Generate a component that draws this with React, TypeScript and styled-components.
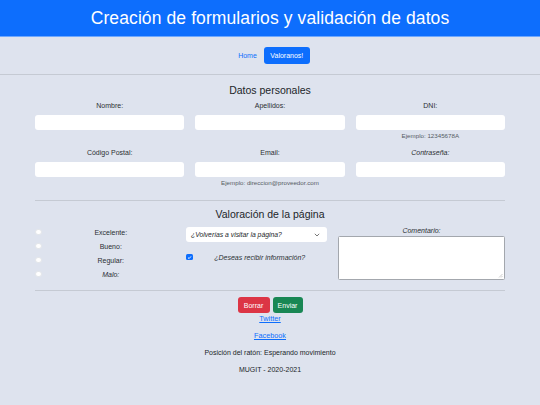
import React from "react";
import styled, { createGlobalStyle } from "styled-components";

const Global = createGlobalStyle`
  html, body { margin: 0; padding: 0; }
  body {
    background: #dee3ee;
    font-family: "Liberation Sans", Arial, sans-serif;
    color: #212529;
    width: 540px;
    height: 405px;
    overflow: hidden;
  }
  * { box-sizing: border-box; }
`;

const Header = styled.header`
  height: 37px;
  background: #0d6efd;
  display: flex;
  align-items: center;
  justify-content: center;
  border-bottom: 1px solid #6ea8fe;
`;

const Title = styled.h1`
  margin: 0;
  color: #fff;
  font-size: 17.5px;
  font-weight: 400;
  letter-spacing: 0.1px;
  padding-top: 1px;
`;

const Nav = styled.nav`
  height: 38px;
  display: flex;
  align-items: center;
  justify-content: center;
  gap: 7px;
  border-bottom: 1px solid #c5cad3;
  padding-left: 8px;
`;

const NavLink = styled.a<{ $active?: boolean }>`
  font-size: 7px;
  text-decoration: none;
  height: 17px;
  display: flex;
  align-items: center;
  padding: 0 ${(p) => (p.$active ? "6.5px" : "0")};
  border-radius: 3px;
  color: ${(p) => (p.$active ? "#fff" : "#0d6efd")};
  background: ${(p) => (p.$active ? "#0d6efd" : "transparent")};
`;

const Main = styled.main`
  padding: 0 35px;
`;

const SectionTitle = styled.h2<{ $top: number }>`
  margin: ${(p) => p.$top}px 0 0;
  height: 18px;
  line-height: 18px;
  text-align: center;
  font-size: 10.5px;
  font-weight: 400;
`;

const FieldGrid = styled.div`
  display: grid;
  grid-template-columns: repeat(3, 1fr);
  column-gap: 11px;
  row-gap: 8px;
  margin-top: 2px;
`;

const Field = styled.div`
  display: flex;
  flex-direction: column;
`;

const Label = styled.label<{ $italic?: boolean }>`
  display: block;
  height: 10px;
  line-height: 10px;
  font-size: 7px;
  color: #2b2f33;
  text-align: center;
  font-style: ${(p) => (p.$italic ? "italic" : "normal")};
`;

const TextInput = styled.div`
  margin-top: 4px;
  height: 15px;
  background: #fff;
  border-radius: 3px;
`;

const Help = styled.div`
  margin-top: 2px;
  height: 8px;
  line-height: 8px;
  font-size: 6.2px;
  color: #555b63;
  text-align: center;
`;

const Rule = styled.hr<{ $top: number }>`
  margin: ${(p) => p.$top}px 0 0;
  border: 0;
  border-top: 1px solid #c5cad3;
`;

const RatingGrid = styled.div`
  display: grid;
  grid-template-columns: 145px 141px 1fr;
  column-gap: 6px;
  margin-top: 1px;
`;

const RadioCol = styled.div`
  display: flex;
  flex-direction: column;
  padding-top: 1px;
`;

const OptionRow = styled.div`
  height: 14px;
  display: flex;
  align-items: center;
`;

const Radio = styled.span`
  width: 6.5px;
  height: 6.5px;
  border-radius: 50%;
  background: #fff;
  border: 0.5px solid #e3e6ea;
  flex: none;
`;

const OptionLabel = styled.span<{ $italic?: boolean }>`
  flex: 1;
  text-align: center;
  font-size: 7px;
  color: #2b2f33;
  font-style: ${(p) => (p.$italic ? "italic" : "normal")};
`;

const MidCol = styled.div`
  display: flex;
  flex-direction: column;
`;

const Select = styled.div`
  margin-top: 3px;
  height: 15px;
  background: #fff;
  border-radius: 3px;
  display: flex;
  align-items: center;
  justify-content: space-between;
  padding: 0 7px 0 5px;
  font-size: 6.8px;
  font-style: italic;
`;

const CheckRow = styled.div`
  margin-top: 8px;
  height: 14px;
  display: flex;
  align-items: center;
`;

const Check = styled.span`
  width: 6.5px;
  height: 6.5px;
  border-radius: 1.5px;
  background: #0d6efd;
  display: flex;
  align-items: center;
  justify-content: center;
  flex: none;
`;

const CommentCol = styled.div`
  display: flex;
  flex-direction: column;
  padding-top: 2px;
  margin-left: 5px;
`;

const TextArea = styled.div`
  height: 44px;
  background: #fff;
  border: 1px solid #a3a7ad;
  border-radius: 1.5px;
  display: flex;
  justify-content: flex-end;
  align-items: flex-end;
  padding: 1px;
`;

const Actions = styled.div`
  margin-top: 6px;
  display: flex;
  justify-content: center;
  gap: 3px;
`;

const Btn = styled.button<{ $bg: string; $w: number }>`
  width: ${(p) => p.$w}px;
  height: 16px;
  border: 0;
  border-radius: 3px;
  background: ${(p) => p.$bg};
  color: #fff;
  font-family: inherit;
  font-size: 7px;
  padding: 0;
`;

const Footer = styled.div`
  display: flex;
  flex-direction: column;
  align-items: center;
  gap: 8px;
  margin-top: 1px;
`;

const FootLink = styled.a`
  height: 9px;
  line-height: 9px;
  font-size: 7.3px;
  color: #0d6efd;
  text-decoration: underline;
`;

const FootText = styled.div`
  height: 9px;
  line-height: 9px;
  font-size: 7px;
`;

export default function App() {
  return (
    <>
      <Global />
      <Header>
        <Title>Creación de formularios y validación de datos</Title>
      </Header>
      <Nav>
        <NavLink>Home</NavLink>
        <NavLink $active>Valoranos!</NavLink>
      </Nav>
      <Main>
        <SectionTitle $top={6}>Datos personales</SectionTitle>
        <FieldGrid>
          <Field>
            <Label>Nombre:</Label>
            <TextInput />
          </Field>
          <Field>
            <Label>Apellidos:</Label>
            <TextInput />
          </Field>
          <Field>
            <Label>DNI:</Label>
            <TextInput />
            <Help>Ejemplo: 12345678A</Help>
          </Field>
          <Field>
            <Label>Código Postal:</Label>
            <TextInput />
          </Field>
          <Field>
            <Label>Email:</Label>
            <TextInput />
            <Help>Ejemplo: direccion@proveedor.com</Help>
          </Field>
          <Field>
            <Label $italic>Contraseña:</Label>
            <TextInput />
          </Field>
        </FieldGrid>
        <Rule $top={13} />
        <SectionTitle $top={4}>Valoración de la página</SectionTitle>
        <RatingGrid>
          <RadioCol>
            {["Excelente:", "Bueno:", "Regular:", "Malo:"].map((t, i) => (
              <OptionRow key={t}>
                <Radio />
                <OptionLabel $italic={i === 3}>{t}</OptionLabel>
              </OptionRow>
            ))}
          </RadioCol>
          <MidCol>
            <Select>
              <span>¿Volverías a visitar la página?</span>
              <svg width="6" height="4" viewBox="0 0 6 4">
                <path d="M0.8 0.8 L3 3 L5.2 0.8" fill="none" stroke="#555" strokeWidth="0.8" />
              </svg>
            </Select>
            <CheckRow>
              <Check>
                <svg width="5" height="5" viewBox="0 0 5 5">
                  <path d="M1 2.6 L2.1 3.6 L4 1.4" fill="none" stroke="#fff" strokeWidth="0.9" />
                </svg>
              </Check>
              <OptionLabel $italic>¿Deseas recibir información?</OptionLabel>
            </CheckRow>
          </MidCol>
          <CommentCol>
            <Label $italic>Comentario:</Label>
            <TextArea>
              <svg width="5" height="5" viewBox="0 0 5 5">
                <path d="M4.5 1 L1 4.5 M4.5 3 L3 4.5" stroke="#999" strokeWidth="0.5" />
              </svg>
            </TextArea>
          </CommentCol>
        </RatingGrid>
        <Rule $top={9} />
        <Actions>
          <Btn $bg="#dc3545" $w={32}>Borrar</Btn>
          <Btn $bg="#198754" $w={30}>Enviar</Btn>
        </Actions>
        <Footer>
          <FootLink>Twitter</FootLink>
          <FootLink>Facebook</FootLink>
          <FootText>Posición del ratón: Esperando movimiento</FootText>
          <FootText>MUGIT - 2020-2021</FootText>
        </Footer>
      </Main>
    </>
  );
}
